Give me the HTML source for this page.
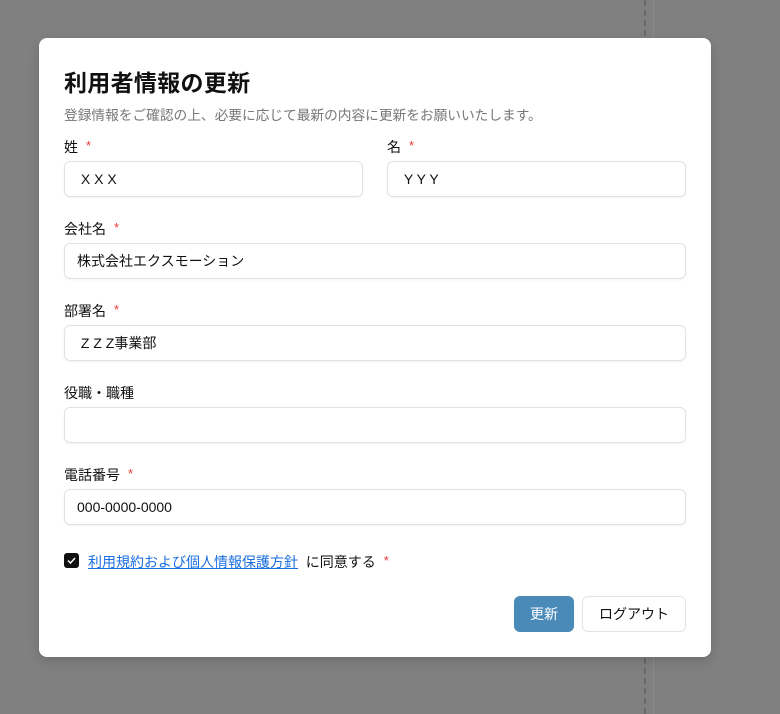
<!DOCTYPE html>
<html><head><meta charset="utf-8"><style>
*{box-sizing:border-box;margin:0;padding:0}
body{width:780px;height:714px;background:#808080;position:relative;overflow:hidden;font-family:"Liberation Sans","Noto Sans CJK JP",sans-serif;color:#111}
.dash{position:absolute;left:644px;top:0;height:714px;border-left:2px dashed #6a6a6a}
.line{position:absolute;left:653px;top:0;height:714px;border-left:1px solid #8c8c8c}
.dlg{position:absolute;left:39px;top:38px;width:672px;height:619px;background:#fff;border-radius:8px;box-shadow:0 4px 12px rgba(0,0,0,.15)}
h1{position:absolute;left:25px;top:26px;font-size:23px;font-weight:bold;letter-spacing:0.3px}
.sub{position:absolute;left:25px;top:66px;font-size:13.7px;color:#777}
.lab{position:absolute;font-size:14px}
.lab b{color:#e53935;font-weight:normal;font-size:13px;margin-left:8px;position:relative;top:-2px}
.in{position:absolute;height:36px;border:1px solid #e2e2e2;border-radius:6px;font-size:14px;padding:0 12px;line-height:34px;box-shadow:0 1px 2px rgba(0,0,0,.05)}
.cb{position:absolute;left:25px;top:515px;width:15px;height:15px;background:#111;border-radius:3px}
.btn{position:absolute;top:558px;height:36px;border-radius:6px;font-size:14px;text-align:center;line-height:36px}
</style></head><body>
<div class="dash"></div><div class="line"></div>
<div class="dlg">
<h1>利用者情報の更新</h1>
<div class="sub">登録情報をご確認の上、必要に応じて最新の内容に更新をお願いいたします。</div>
<div class="lab" style="left:25px;top:99px">姓<b>*</b></div>
<div class="lab" style="left:348px;top:99px">名<b>*</b></div>
<div class="in" style="left:25px;top:123px;width:299px">&nbsp;X X X</div>
<div class="in" style="left:348px;top:123px;width:299px">&nbsp;Y Y Y</div>
<div class="lab" style="left:25px;top:181px">会社名<b>*</b></div>
<div class="in" style="left:25px;top:205px;width:622px">株式会社エクスモーション</div>
<div class="lab" style="left:25px;top:263px">部署名<b>*</b></div>
<div class="in" style="left:25px;top:287px;width:622px">&nbsp;Z Z Z事業部</div>
<div class="lab" style="left:25px;top:345px">役職・職種</div>
<div class="in" style="left:25px;top:369px;width:622px"></div>
<div class="lab" style="left:25px;top:427px">電話番号<b>*</b></div>
<div class="in" style="left:25px;top:451px;width:622px">000-0000-0000</div>
<div class="cb"><svg width="15" height="15" viewBox="0 0 15 15"><path d="M4 7.5l2.5 2.5 4.5-5" stroke="#fff" stroke-width="1.5" fill="none"/></svg></div>
<div class="lab" style="left:49px;top:514px"><span style="color:#1a6fe0;text-decoration:underline">利用規約および個人情報保護方針</span>&nbsp; に同意する<b>*</b></div>
<div class="btn" style="left:475px;width:60px;background:#4a8ab9;color:#fff">更新</div>
<div class="btn" style="left:543px;width:104px;border:1px solid #e2e2e2;line-height:34px">ログアウト</div>
</div>
</body></html>
